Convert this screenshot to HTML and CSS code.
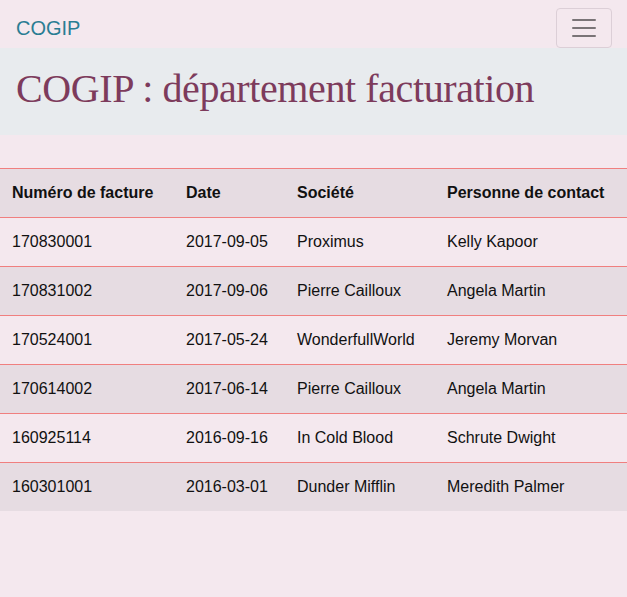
FILE: index.html
```html
<!DOCTYPE html>
<html lang="fr">
<head>
<meta charset="utf-8">
<title>COGIP</title>
<link rel="stylesheet" href="styles.css">
</head>
<body>
<nav class="navbar">
  <a class="brand" href="#">COGIP</a>
  <button class="toggler" type="button" aria-label="Menu">
    <svg width="30" height="30" viewBox="0 0 30 30"><path d="M4 7h22M4 15h22M4 23h22" stroke="rgba(0,0,0,0.5)" stroke-width="2" stroke-linecap="round"/></svg>
  </button>
</nav>
<header class="jumbo">
  <h1 class="title">COGIP : département facturation</h1>
</header>
<main class="content">
  <table class="invoices">
    <colgroup>
      <col class="c1"><col class="c2"><col class="c3"><col class="c4">
    </colgroup>
    <thead>
      <tr><th>Numéro de facture</th><th>Date</th><th>Société</th><th>Personne de contact</th></tr>
    </thead>
    <tbody>
      <tr><td>170830001</td><td>2017-09-05</td><td>Proximus</td><td>Kelly Kapoor</td></tr>
      <tr><td>170831002</td><td>2017-09-06</td><td>Pierre Cailloux</td><td>Angela Martin</td></tr>
      <tr><td>170524001</td><td>2017-05-24</td><td>WonderfullWorld</td><td>Jeremy Morvan</td></tr>
      <tr><td>170614002</td><td>2017-06-14</td><td>Pierre Cailloux</td><td>Angela Martin</td></tr>
      <tr><td>160925114</td><td>2016-09-16</td><td>In Cold Blood</td><td>Schrute Dwight</td></tr>
      <tr><td>160301001</td><td>2016-03-01</td><td>Dunder Mifflin</td><td>Meredith Palmer</td></tr>
    </tbody>
  </table>
</main>
</body>
</html>
```

FILE: styles.css
```css
* { box-sizing: border-box; }
html, body {
  margin: 0;
  padding: 0;
  background: #f4e8ee;
  font-family: "Liberation Sans", Arial, sans-serif;
  color: #212529;
  font-size: 16px;
}
.navbar {
  display: flex;
  align-items: center;
  justify-content: space-between;
  padding: 8px 15px 0 16px;
  height: 48px;
}
.brand {
  color: #2a7d93;
  text-decoration: none;
  font-size: 20px;
  line-height: 30px;
  margin-top: -1px;
}
.toggler {
  width: 56px;
  height: 40px;
  border: 1px solid #dccfd7;
  border-radius: 4px;
  background: transparent;
  display: flex;
  align-items: center;
  justify-content: center;
  padding: 0;
}
.toggler svg { display: block; }
.jumbo {
  background: #e8ebee;
  height: 87px;
  padding: 17px 16px 0 16px;
}
.title {
  margin: 0;
  font-family: "Liberation Serif", "Times New Roman", serif;
  font-weight: normal;
  font-size: 40px;
  line-height: 48px;
  letter-spacing: -0.4px;
  color: #7d3b5c;
}
.content {
  padding-top: 33px;
}
.invoices {
  width: 100%;
  border-collapse: collapse;
  table-layout: fixed;
}
.c1 { width: 174px; }
.c2 { width: 111px; }
.c3 { width: 150px; }
.c4 { width: 192px; }
.invoices th, .invoices td {
  text-align: left;
  padding: 0 12px;
  height: 49px;
  border-top: 1px solid #f07f7f;
  vertical-align: middle;
  white-space: nowrap;
  color: #111;
}
.invoices th {
  font-weight: bold;
  background: #e6dce2;
  height: 49px;
}
.invoices tbody tr:nth-child(even) td { background: #e6dce2; }
.invoices tbody tr:nth-child(odd) td { background: #f4e8ee; }
.invoices tbody tr:last-child td { height: 48px; }
```
